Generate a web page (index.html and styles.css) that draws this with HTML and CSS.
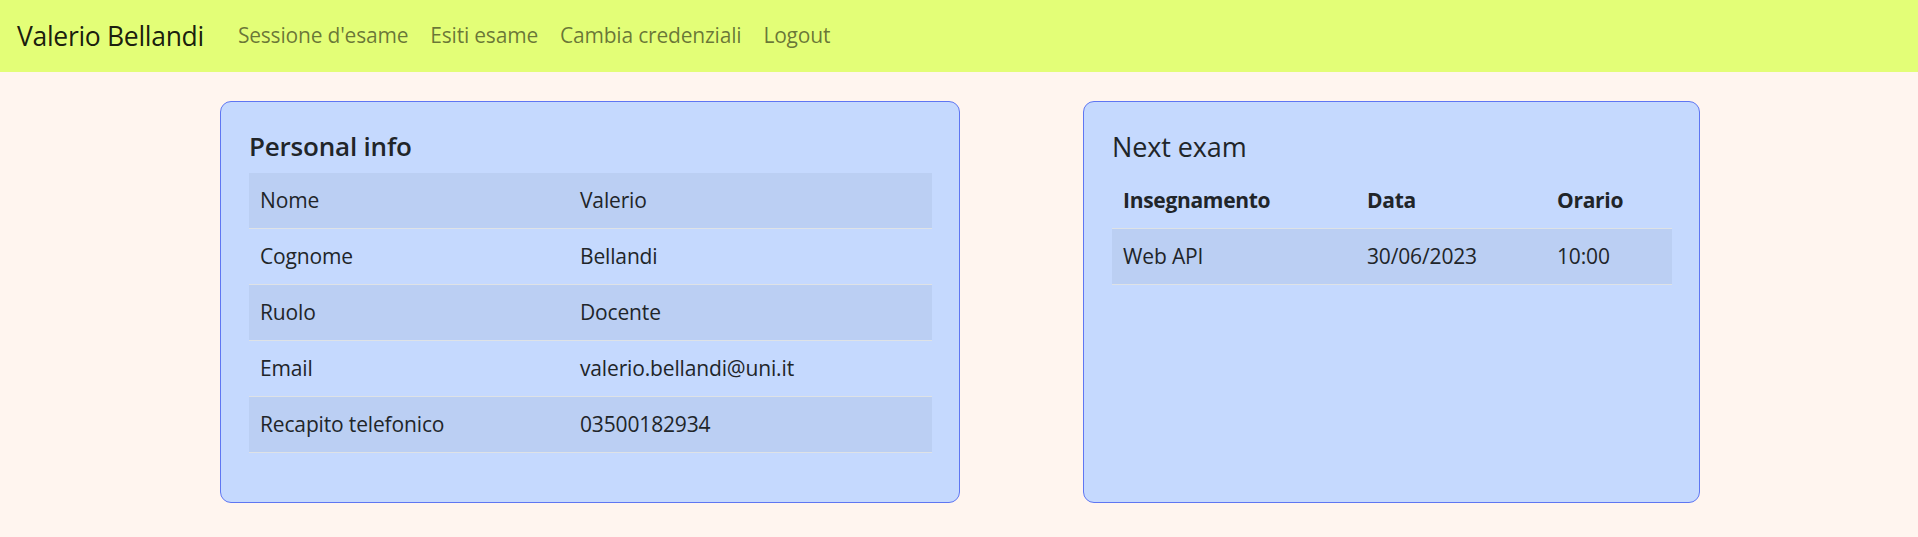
FILE: index.html
```html
<!DOCTYPE html>
<html lang="it">
<head>
<meta charset="utf-8">
<title>Valerio Bellandi</title>
<link rel="stylesheet" href="styles.css">
</head>
<body>
<nav class="navbar">
  <a class="brand" href="#">Valerio Bellandi</a>
  <ul class="nav-links">
    <li><a class="nav-link" href="#">Sessione d'esame</a></li>
    <li><a class="nav-link" href="#">Esiti esame</a></li>
    <li><a class="nav-link" href="#">Cambia credenziali</a></li>
    <li><a class="nav-link" href="#">Logout</a></li>
  </ul>
</nav>
<main class="content">
  <section class="card card-info">
    <h5 class="card-title">Personal info</h5>
    <table class="table">
      <colgroup><col class="col-label"><col></colgroup>
      <tbody>
        <tr><td>Nome</td><td>Valerio</td></tr>
        <tr><td>Cognome</td><td>Bellandi</td></tr>
        <tr><td>Ruolo</td><td>Docente</td></tr>
        <tr><td>Email</td><td>valerio.bellandi@uni.it</td></tr>
        <tr><td>Recapito telefonico</td><td>03500182934</td></tr>
      </tbody>
    </table>
  </section>
  <section class="card card-exam">
    <h5 class="card-title regular">Next exam</h5>
    <table class="table">
      <colgroup><col class="col-course"><col class="col-date"><col></colgroup>
      <thead>
        <tr><th>Insegnamento</th><th>Data</th><th>Orario</th></tr>
      </thead>
      <tbody>
        <tr><td>Web API</td><td>30/06/2023</td><td>10:00</td></tr>
      </tbody>
    </table>
  </section>
</main>
</body>
</html>
```
FILE: styles.css
```css
* {
  box-sizing: border-box;
}

body {
  margin: 0;
  background: #fff5ef;
  color: #212529;
  font-family: "Open Sans", "Noto Sans", sans-serif;
  font-size: 21px;
  letter-spacing: -0.15px;
  line-height: 1.5;
}

.navbar {
  height: 72px;
  background: #e3fe77;
  display: flex;
  align-items: center;
  padding: 0 17px;
}

.brand {
  font-size: 26.5px;
  letter-spacing: -0.3px;
  line-height: 41px;
  color: rgba(0, 0, 0, 0.9);
  text-decoration: none;
  margin-right: 23px;
}

.nav-links {
  display: flex;
  list-style: none;
  margin: 0 0 2px 0;
  padding: 0;
}

.nav-link {
  display: block;
  padding: 0 11px;
  font-size: 21px;
  letter-spacing: -0.2px;
  line-height: 33px;
  color: rgba(0, 0, 0, 0.55);
  text-decoration: none;
}

.content {
  display: flex;
  align-items: stretch;
  gap: 123px;
  padding: 29px 0 0 220px;
}

.card {
  background: #c5d9fe;
  border: 1px solid #5f76f2;
  border-radius: 11px;
  padding: 27px 27px 27px 28px;
}

.card-info {
  width: 740px;
}

.card-exam {
  width: 617px;
}

.card-title {
  margin: 0 0 10px 0;
  padding-top: 1px;
  font-size: 26px;
  letter-spacing: -0.2px;
  line-height: 33px;
  font-weight: 600;
}

.card-title.regular {
  font-size: 27px;
  letter-spacing: -0.1px;
  font-weight: 400;
}

.table {
  width: 100%;
  border-collapse: collapse;
  margin-bottom: 22px;
}

.table td,
.table th {
  padding: 11px;
  line-height: 33px;
  text-align: left;
  border-bottom: 1px solid #dee2e6;
}

.table th {
  font-weight: 700;
  letter-spacing: -0.3px;
}

.table tbody tr:nth-child(odd) {
  background: #bbcff3;
}

.col-label {
  width: 320px;
}

.col-course {
  width: 244px;
}

.col-date {
  width: 190px;
}
```
